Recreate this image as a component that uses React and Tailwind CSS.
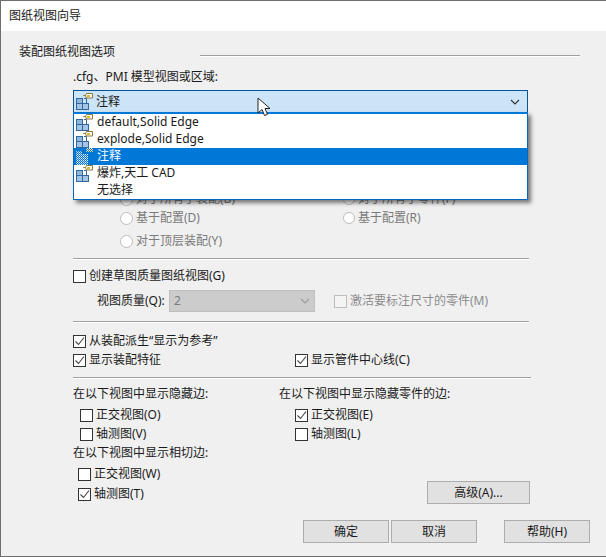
import React from 'react';

const FONT = '"Noto Sans","Noto Sans CJK SC",sans-serif';

const ViewIcon = ({ selected }) => {
    if (selected) {
        return (
            <svg width="18" height="17" viewBox="0 0 18 17" className="shrink-0">
                <defs>
                    <pattern id="dither" width="2" height="2" patternUnits="userSpaceOnUse">
                        <rect width="2" height="2" fill="#0078d7" />
                        <rect width="1" height="1" fill="#e4ecf4" />
                        <rect x="1" y="1" width="1" height="1" fill="#a8c4e0" />
                    </pattern>
                    <pattern id="ditherTag" width="2" height="2" patternUnits="userSpaceOnUse">
                        <rect width="2" height="2" fill="#0078d7" />
                        <rect width="1" height="1" fill="#ffffff" />
                        <rect x="1" y="1" width="1" height="1" fill="#e8d070" />
                    </pattern>
                </defs>
                <path d="M1 3h6v3h6v11H1z" fill="url(#dither)" />
                <rect x="11" y="0" width="7" height="4" fill="url(#ditherTag)" />
            </svg>
        );
    }
    return (
        <svg width="18" height="17" viewBox="0 0 18 17" className="shrink-0">
            <rect x="1.5" y="5.5" width="6" height="5" fill="#8fb6dc" stroke="#33689f" />
            <rect x="1.5" y="10.5" width="6" height="6" fill="#a3c4e4" stroke="#33689f" />
            <rect x="7.5" y="10.5" width="6" height="6" fill="#a3c4e4" stroke="#33689f" />
            <path d="M9 5.5h2.5v5" fill="none" stroke="#33689f" />
            <path d="M8.5 2.5h2l1-2h6v4.5h-6l-1-2.5z" fill="#fff" stroke="#8a7a3a" />
            <rect x="12" y="2" width="3" height="2" fill="#e8b830" />
        </svg>
    );
};

const Chevron = ({ color }) => (
    <svg width="10" height="6" viewBox="0 0 10 6">
        <path d="M1 1l4 4 4-4" fill="none" stroke={color} strokeWidth="1.1" />
    </svg>
);

const Check = ({ checked, disabled, label, className = '' }) => (
    <div className={`flex items-center h-[19px] ${className}`}>
        <span className={`w-[13px] h-[13px] border flex items-center justify-center shrink-0 ${disabled ? 'border-[#bdbdbd] bg-[#f4f4f4]' : 'border-[#333] bg-white'}`}>
            {checked && (
                <svg width="11" height="11" viewBox="0 0 11 11">
                    <path d="M1.5 5.5l3 3 5.5-7" fill="none" stroke="#444" strokeWidth="1.1" />
                </svg>
            )}
        </span>
        <span className={`ml-[3px] pb-[1px] whitespace-nowrap ${disabled ? 'text-[#8c8c8c]' : ''}`}>{label}</span>
    </div>
);

const Radio = ({ label, small, className = '' }) => (
    <div className={`flex items-center h-[20px] text-[#7a7a7a] ${className}`}>
        <span className={`rounded-full border border-[#bcbcbc] bg-white shrink-0 ${small ? 'w-[12px] h-[12px]' : 'w-[13px] h-[13px]'}`} />
        <span className="ml-[3px] pb-[1px] whitespace-nowrap">{label}</span>
    </div>
);

const Rule = ({ className = '' }) => (
    <div className={`h-[2px] border-t border-[#a0a0a0] bg-white ${className}`} />
);

const Btn = ({ label, className = '' }) => (
    <button className={`h-[23px] bg-[#e1e1e1] border border-[#adadad] text-center text-[12px] ${className}`}>{label}</button>
);

const options = [
    { label: 'default,Solid Edge', icon: true },
    { label: 'explode,Solid Edge', icon: true },
    { label: '注释', icon: true, selected: true },
    { label: '爆炸,天工 CAD', icon: true },
    { label: '无选择' },
];

export default function App() {
    return (
        <div
            className="relative w-[606px] h-[557px] overflow-hidden bg-[#f0f0f0] border-l border-t border-b border-[#6e6e6e] text-[12px] text-[#1a1a1a] flex flex-col"
            style={{ fontFamily: FONT }}
        >
            <div className="h-[30px] shrink-0 bg-white flex items-center pl-[8px] pb-[1px]">图纸视图向导</div>

            <div className="flex items-center h-[18px] mt-[12px] pl-[18px]">
                <span className="w-[181px]">装配图纸视图选项</span>
                <div className="w-[380px] mt-[8px] h-[2px] border-t border-[#a0a0a0] bg-white" />
            </div>

            <div className="ml-[72px] w-[456px] flex flex-col">
                <div className="h-[18px] mt-[7px] flex items-center">.cfg、PMI 模型视图或区域:</div>

                {/* combo box and its open list */}
                <div className="relative mt-[4px] h-[23px] w-[455px] bg-[#cce4f7] border border-[#005499] flex items-center pl-[1px] pr-[7px]">
                    <ViewIcon />
                    <span className="ml-[3px] flex-1">注释</span>
                    <Chevron color="#333" />
                    <div className="absolute left-[-1px] right-[-1px] top-[21px] h-[88px] z-10 bg-white border border-t-2 border-[#0067c0] border-t-[#0078d7] shadow-[3px_3px_4px_rgba(0,0,0,0.5)]">
                        {options.map((o) => (
                            <div
                                key={o.label}
                                className={`h-[17px] flex items-center pl-[1px] ${o.selected ? 'bg-[#0078d7] text-white' : ''}`}
                            >
                                {o.icon ? <ViewIcon selected={o.selected} /> : <span className="w-[18px]" />}
                                <span className="ml-[4px] pb-[2px] leading-[15px]">{o.label}</span>
                            </div>
                        ))}
                    </div>
                </div>

                {/* radios, the first row is mostly hidden by the list */}
                <div className="mt-[76px] pl-[47px] flex">
                    <div className="w-[223px]">
                        <Radio label="对于所有子装配(B)" />
                        <Radio label="基于配置(D)" className="mt-[-1px]" />
                        <Radio label="对于顶层装配(Y)" className="mt-[3px]" />
                    </div>
                    <div>
                        <Radio small label="对于所有子零件(F)" />
                        <Radio small label="基于配置(R)" className="mt-[-1px]" />
                    </div>
                </div>

                <Rule className="mt-[7px]" />

                <Check label="创建草图质量图纸视图(G)" className="mt-[7px]" />
                <div className="flex items-center mt-[4px] h-[22px]">
                    <span className="ml-[24px] w-[72px]">视图质量(Q):</span>
                    <div className="w-[146px] h-[22px] bg-[#cccccc] border border-[#bfbfbf] flex items-center justify-between pl-[4px] pr-[4px] text-[#7a7a7a]">
                        <span>2</span>
                        <Chevron color="#9a9a9a" />
                    </div>
                    <Check disabled label="激活要标注尺寸的零件(M)" className="ml-[19px]" />
                </div>

                <Rule className="mt-[9px]" />

                <Check checked label="从装配派生“显示为参考”" className="mt-[9px]" />
                <div className="flex">
                    <Check checked label="显示装配特征" className="w-[222px]" />
                    <Check checked label="显示管件中心线(C)" />
                </div>

                <Rule className="mt-[7px] w-[458px]" />

                <div className="flex mt-[6px]">
                    <div className="w-[206px]">
                        <div className="h-[18px] flex items-center">在以下视图中显示隐藏边:</div>
                        <Check label="正交视图(O)" className="ml-[7px] mt-[3px]" />
                        <Check label="轴测图(V)" className="ml-[7px]" />
                        <div className="h-[18px] flex items-center">在以下视图中显示相切边:</div>
                        <Check label="正交视图(W)" className="ml-[5px] mt-[3px]" />
                        <Check checked label="轴测图(T)" className="ml-[5px] mt-[1px]" />
                    </div>
                    <div className="flex-1">
                        <div className="h-[18px] flex items-center">在以下视图中显示隐藏零件的边:</div>
                        <Check checked label="正交视图(E)" className="ml-[16px] mt-[3px]" />
                        <Check label="轴测图(L)" className="ml-[16px]" />
                        <div className="flex justify-end mt-[37px]">
                            <Btn label="高级(A)..." className="w-[103px] mr-[-1px]" />
                        </div>
                    </div>
                </div>
            </div>

            <div className="flex mt-[16px] ml-[302px]">
                <Btn label="确定" className="w-[86px]" />
                <Btn label="取消" className="w-[86px] ml-[2px]" />
                <Btn label="帮助(H)" className="w-[86px] ml-[27px]" />
            </div>

            {/* mouse pointer */}
            <svg width="16" height="22" viewBox="0 0 16 22" className="absolute left-[256px] top-[96px] z-20">
                <path d="M1 1v15l4-3.5 2.5 6 3-1.2-2.5-5.8h5z" fill="#fff" stroke="#222" strokeWidth="1" />
            </svg>
        </div>
    );
}
